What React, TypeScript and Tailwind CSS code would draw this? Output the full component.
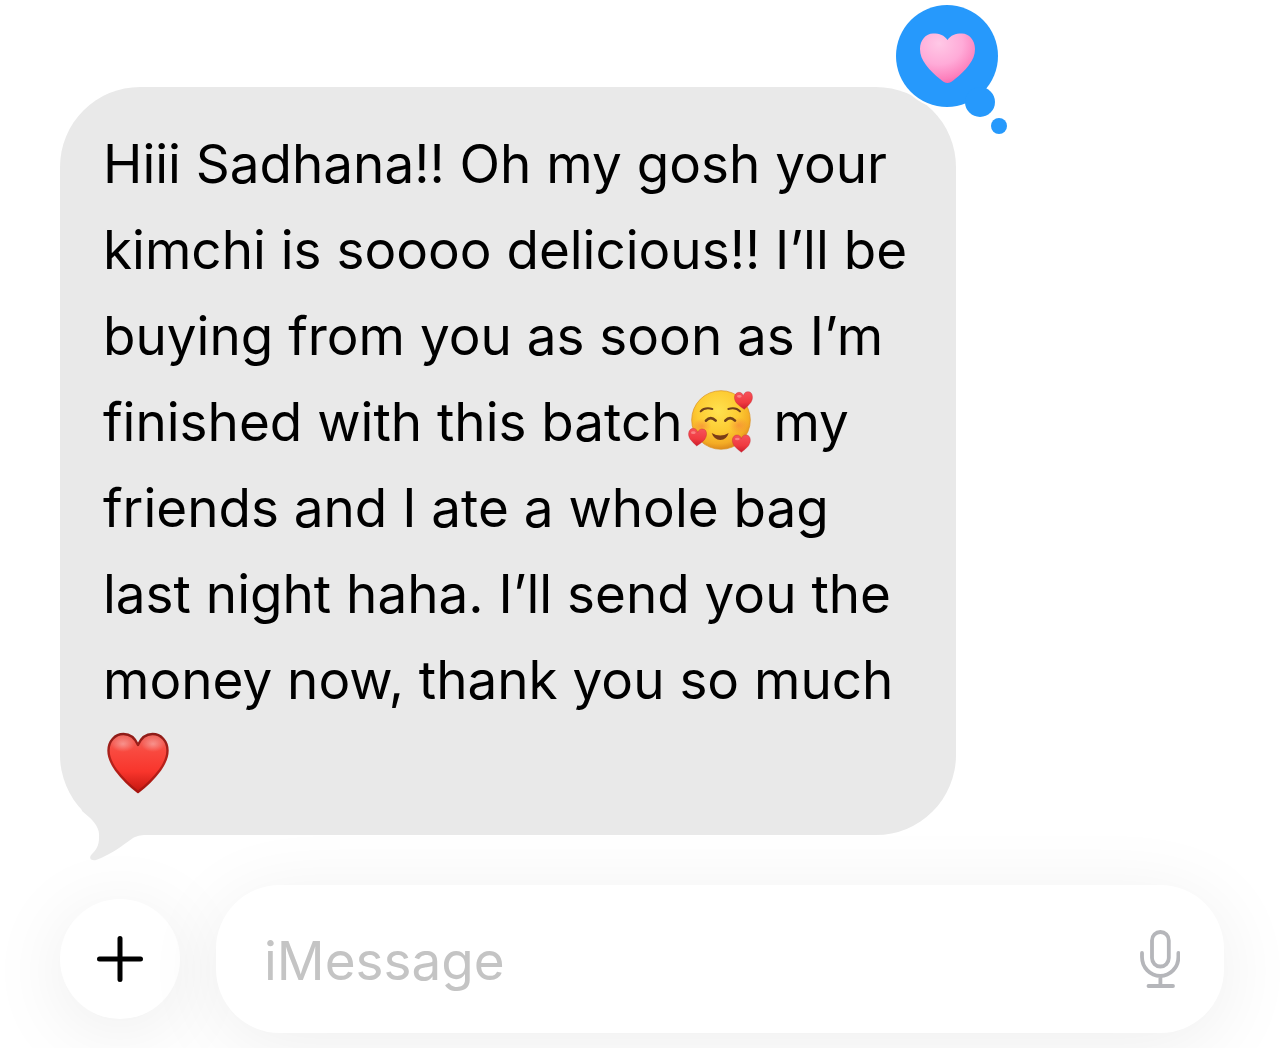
import { useState } from "react";

const lines = [
  "Hiii Sadhana!! Oh my gosh your",
  "kimchi is soooo delicious!! I’ll be",
  "buying from you as soon as I’m",
];

const linesAfterFace = [
  "friends and I ate a whole bag",
  "last night haha. I’ll send you the",
  "money now, thank you so much",
];

function RedHeart() {
  return (
    <svg viewBox="0 0 62 62" className="inline-block w-[62px] h-[62px] ml-1 align-[-9px]" role="img" aria-label="Red heart">
      <defs>
        <linearGradient id="redFill" x1="0" y1="0" x2="0" y2="1">
          <stop offset="0" stopColor="#ee6a62" />
          <stop offset="0.3" stopColor="#f9493f" />
          <stop offset="0.65" stopColor="#f8352c" />
          <stop offset="1" stopColor="#c4160f" />
        </linearGradient>
        <linearGradient id="redEdge" x1="0" y1="0" x2="0" y2="1">
          <stop offset="0" stopColor="#8e1c18" />
          <stop offset="0.5" stopColor="#b8221b" />
          <stop offset="1" stopColor="#a8150f" />
        </linearGradient>
        <radialGradient id="redShine">
          <stop offset="0" stopColor="#fff" stopOpacity="0.35" />
          <stop offset="1" stopColor="#fff" stopOpacity="0" />
        </radialGradient>
      </defs>
      <path
        d="M31 60C23 54 15 46 9 38C4 31 1.500 25 1.500 18.500C1.500 9 8 2 16.500 2C23.500 2 28 6 31 13C34 6 38.500 2 45.500 2C54 2 60.500 9 60.500 18.500C60.500 25 58 31 53 38C47 46 39 54 31 60Z"
        fill="url(#redFill)"
        stroke="url(#redEdge)"
        strokeWidth="2.400"
        strokeLinejoin="round"
      />
      <ellipse cx="16" cy="12" rx="12" ry="8" fill="url(#redShine)" />
      <ellipse cx="46" cy="12" rx="12" ry="8" fill="url(#redShine)" />
    </svg>
  );
}

function HeartsFace() {
  const heart = "M0 27C-8 21 -15 15 -21 8C-25 2 -27 -3 -27 -9C-27 -19 -20 -25 -13 -25C-6 -25 -2 -21 0 -14C3 -22 8 -26 15 -25C22 -25 27 -19 27 -10C27 -3 25 2 21 8C15 15 8 21 0 27Z";
  return (
    <svg viewBox="27 27 204 192" className="inline-block mx-1 w-[68px] h-[64px] align-[-12px]" role="img" aria-label="Smiling face with hearts">
      <defs>
        <radialGradient id="face" cx="0.45" cy="0.35" r="0.65">
          <stop offset="0" stopColor="#ffe24f" />
          <stop offset="0.55" stopColor="#fdcb32" />
          <stop offset="0.85" stopColor="#f4ac25" />
          <stop offset="1" stopColor="#dd8b1c" />
        </radialGradient>
        <radialGradient id="cheek">
          <stop offset="0" stopColor="#f5803a" stopOpacity="0.6" />
          <stop offset="1" stopColor="#f5803a" stopOpacity="0" />
        </radialGradient>
        <linearGradient id="tinyHeart" x1="0" y1="0" x2="0" y2="1">
          <stop offset="0" stopColor="#f6525a" />
          <stop offset="0.6" stopColor="#f03a40" />
          <stop offset="1" stopColor="#cc1c2c" />
        </linearGradient>
      </defs>
      <circle cx="129" cy="120" r="88" fill="url(#face)" stroke="#d9901f" strokeWidth="2" />
      <ellipse cx="72" cy="138" rx="28" ry="22" fill="url(#cheek)" />
      <ellipse cx="182" cy="136" rx="30" ry="24" fill="url(#cheek)" />
      <g fill="none" stroke="#70401a" strokeLinecap="round" strokeLinejoin="round">
        <path d="M68 94Q80 81 103 87M151 87Q173 80 186 94" strokeWidth="6" />
        <path d="M84 122Q98 107 113 122M142 122Q156 107 171 122" strokeWidth="8" />
      </g>
      <path d="M101 159Q127 174 152 159Q146 179 127 180Q108 179 101 159Z" fill="#7a3c17" />
      <g fill="url(#tinyHeart)" stroke="#bb2430" strokeWidth="1">
        <path d={heart} transform="translate(197 61)rotate(-4)" />
        <path d={heart} transform="translate(58 171)rotate(4)" />
        <path d={heart} transform="translate(190 190)" />
      </g>
      <g fill="#ff9a96" opacity="0.7">
        <ellipse cx="184" cy="49" rx="7" ry="4" />
        <ellipse cx="46" cy="158" rx="7" ry="4" />
        <ellipse cx="178" cy="177" rx="7" ry="4" />
      </g>
    </svg>
  );
}

function Reaction() {
  return (
    <svg viewBox="0 0 116 134" className="absolute -top-[84px] -right-[54px] w-[116px] h-[134px]" role="img" aria-label="Loved">
      <defs>
        <radialGradient id="pink" cx="0.35" cy="0.2" r="0.85">
          <stop offset="0" stopColor="#ffc8e6" />
          <stop offset="0.5" stopColor="#ffabd8" />
          <stop offset="0.85" stopColor="#fc80bc" />
          <stop offset="1" stopColor="#f565ac" />
        </radialGradient>
      </defs>
      <g fill="#fff">
        <circle cx="53" cy="53" r="53" />
        <circle cx="86" cy="99" r="17" />
      </g>
      <g fill="#2699fc">
        <circle cx="53" cy="53" r="51" />
        <circle cx="86" cy="99" r="15" />
        <circle cx="105" cy="123" r="8" />
      </g>
      <path
        d="M53.500 80C51 80 49 78.500 46 76C41 72 36 67.500 32 62C28 56.500 26 52 26 46C26 37 32 30.500 39 30.500C46 30.500 50 32 53.500 37C57 32 61 30.500 68 30.500C75 30.500 81 37 81 46C81 52 79 56.500 75 62C71 67.500 66 72 61 76C58 78.500 56 80 53.500 80Z"
        fill="url(#pink)"
      />
    </svg>
  );
}

function MicIcon() {
  return (
    <svg viewBox="0 0 40 58" className="w-10 h-[58px]" fill="none" stroke="#b5b6ba" strokeWidth="3.800" strokeLinecap="round">
      <rect x="12" y="2" width="16.800" height="34.500" rx="8.400" />
      <path d="M2 23V27A18.200 19 0 0 0 38.400 27V23M20.400 46V56M8.500 56H33" />
    </svg>
  );
}

function Bubble() {
  return (
    <div className="relative w-full max-w-[896px] rounded-[80px] bg-[#e9e9e9] pt-[34px] pb-[26px] pl-[43px]">
      <svg viewBox="0 0 90 64" className="absolute left-5 -bottom-[29px] w-[90px] h-16" fill="#e9e9e9" aria-hidden="true">
        <path d="M2 11C16 22 20 29 19 38C19 46 16 50 12 54C8 58 11 61 16 60C30 55 42 46 53 38C57 36 60 35 66 35L90 0H0Z" />
      </svg>
      <p className="relative text-[53px] leading-[86px] whitespace-nowrap text-black">
        {lines.map((line) => (
          <span key={line} className="block">{line}</span>
        ))}
        <span className="block h-[86px]">finished with this batch<HeartsFace /> my</span>
        {linesAfterFace.map((line) => (
          <span key={line} className="block">{line}</span>
        ))}
        <span className="block h-[86px]"><RedHeart /></span>
      </p>
      <Reaction />
    </div>
  );
}

export default function App() {
  const [draft, setDraft] = useState("");

  return (
    <main className="min-h-screen flex flex-col justify-between overflow-hidden bg-white px-[60px] pt-[87px] pb-[15px] font-['Inter',sans-serif]">
      <Bubble />
      <form className="mt-[50px] flex items-center gap-9" onSubmit={(e) => e.preventDefault()}>
        <button
          type="button"
          aria-label="Add attachment"
          className="flex size-[120px] shrink-0 items-center justify-center rounded-full bg-white shadow-[0_12px_80px_rgba(0,0,0,0.08)]"
        >
          <svg viewBox="0 0 48 48" className="size-12" fill="none" stroke="#000" strokeWidth="5" strokeLinecap="round">
            <path d="M24 3.500V44.500M3.500 24H44.500" />
          </svg>
        </button>
        <div className="flex h-[148px] min-w-0 flex-1 items-center rounded-[64px] bg-white pr-11 pl-12 shadow-[0_12px_80px_rgba(0,0,0,0.07)]">
          <input
            type="text"
            aria-label="iMessage"
            placeholder="iMessage"
            value={draft}
            onChange={(e) => setDraft(e.target.value)}
            className="h-[86px] min-w-0 flex-1 bg-transparent pt-1 text-[53px] text-black outline-none placeholder:text-[#c4c4c4]"
          />
          <button type="button" aria-label="Dictate" className="shrink-0">
            <MicIcon />
          </button>
        </div>
      </form>
    </main>
  );
}
